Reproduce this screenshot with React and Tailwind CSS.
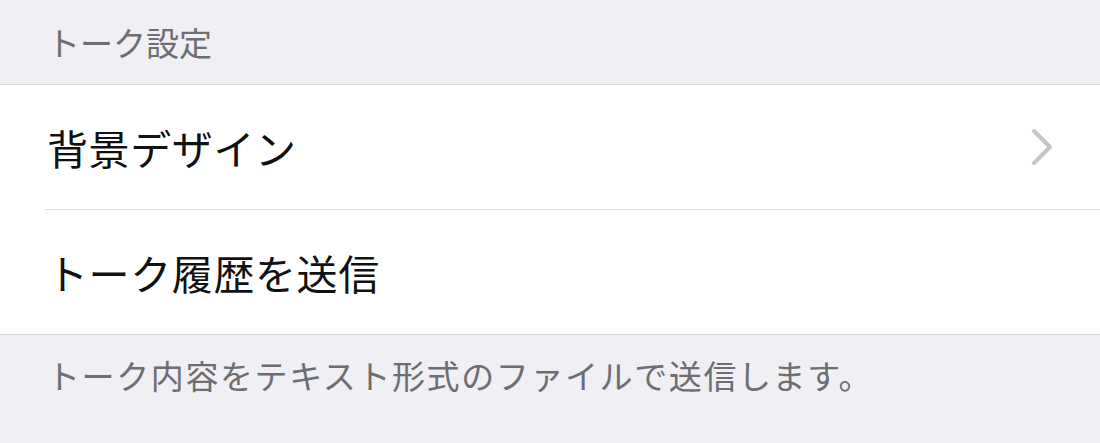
const rows = [
  { label: '背景デザイン', chevron: true },
  { label: 'トーク履歴を送信', chevron: false },
]

const Chevron = () => (
  <svg width="24" height="38" viewBox="0 0 24 38" fill="none" className="shrink-0">
    <path d="M4 3 L20 19 L4 35" stroke="#c4c4c9" strokeWidth="4" strokeLinecap="round" strokeLinejoin="round" />
  </svg>
)

export default function App() {
  return (
    <div
      className="flex h-[443px] w-[1100px] flex-col bg-[#efeff4]"
      style={{ fontFamily: '"Noto Sans CJK JP", "Noto Sans", sans-serif' }}
    >
      {/* section header */}
      <div className="flex h-[85px] shrink-0 items-center border-b border-[#d6d6da] pl-[47px]">
        <span className="text-[33px] leading-none text-[#6d6d72]">トーク設定</span>
      </div>

      {/* rows */}
      <div className="flex flex-col bg-white">
        {rows.map((row, i) => (
          <div key={row.label} className="flex flex-col pl-[45px]">
            <div className="flex h-[124px] items-center pr-[46px]">
              <span className="flex-1 pl-[2px] text-[41px] leading-none tracking-[0.6px] text-[#111]">{row.label}</span>
              {row.chevron && <Chevron />}
            </div>
            {i < rows.length - 1 && <div className="h-px bg-[#dcdce0]" />}
          </div>
        ))}
      </div>

      {/* footer */}
      <div className="border-t border-[#d6d6da] pl-[47px] pt-[24px]">
        <span className="text-[33px] leading-none tracking-[1.6px] text-[#6d6d72]">
          トーク内容をテキスト形式のファイルで送信します。
        </span>
      </div>
    </div>
  )
}
